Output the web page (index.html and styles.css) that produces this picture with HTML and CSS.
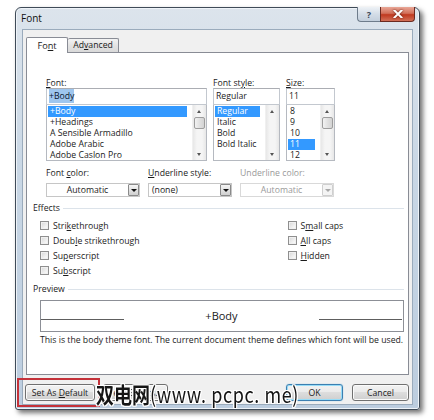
FILE: index.html
```html
<!DOCTYPE html>
<html lang="en">
<head>
    <meta charset="UTF-8">
    <meta name="viewport" content="width=device-width, initial-scale=1.0">
    <title>Font</title>
    <link rel="stylesheet" href="styles.css">
</head>
<body>
    <div class="desk">
        <div class="window">
            <div class="titlebar">
                <span class="title">Font</span>
                <div class="caption-btns">
                    <span class="cap-help">?</span>
                    <span class="cap-close">
                        <svg width="10" height="8" viewBox="0 0 10 8"><path d="M1.5 0.5 L8.5 7.5 M8.5 0.5 L1.5 7.5" stroke="#fff" stroke-width="2" stroke-linecap="square"/></svg>
                    </span>
                </div>
            </div>

            <div class="client">
                <div class="tabs">
                    <div class="tab active">Fo<u>n</u>t</div>
                    <div class="tab">Ad<u>v</u>anced</div>
                </div>

                <div class="panel">
                    <div class="pickers">
                        <div class="field">
                            <div class="lbl"><u>F</u>ont:</div>
                            <div class="textbox"><span class="hl">+Body</span></div>
                            <div class="listbox">
                                <ul>
                                    <li class="selected">+Body</li>
                                    <li>+Headings</li>
                                    <li>A Sensible Armadillo</li>
                                    <li>Adobe Arabic</li>
                                    <li>Adobe Caslon Pro</li>
                                </ul>
                                <div class="vscroll">
                                    <span class="arr up"></span>
                                    <span class="thumb"></span>
                                    <span class="track"></span>
                                    <span class="arr down"></span>
                                </div>
                            </div>
                        </div>
                        <div class="field">
                            <div class="lbl">Font st<u>y</u>le:</div>
                            <div class="textbox">Regular</div>
                            <div class="listbox">
                                <ul>
                                    <li class="selected">Regular</li>
                                    <li>Italic</li>
                                    <li>Bold</li>
                                    <li>Bold Italic</li>
                                </ul>
                                <div class="vscroll">
                                    <span class="arr up"></span>
                                    <span class="track"></span>
                                    <span class="arr down"></span>
                                </div>
                            </div>
                        </div>
                        <div class="field">
                            <div class="lbl"><u>S</u>ize:</div>
                            <div class="textbox">11</div>
                            <div class="listbox">
                                <ul>
                                    <li>8</li>
                                    <li>9</li>
                                    <li>10</li>
                                    <li class="selected">11</li>
                                    <li>12</li>
                                </ul>
                                <div class="vscroll">
                                    <span class="arr up"></span>
                                    <span class="thumb"></span>
                                    <span class="track"></span>
                                    <span class="arr down"></span>
                                </div>
                            </div>
                        </div>
                    </div>

                    <div class="combos">
                        <div class="field">
                            <div class="lbl">Font <u>c</u>olor:</div>
                            <div class="combo center"><span class="val">Automatic</span><span class="drop"></span></div>
                        </div>
                        <div class="field">
                            <div class="lbl"><u>U</u>nderline style:</div>
                            <div class="combo"><span class="val">(none)</span><span class="drop"></span></div>
                        </div>
                        <div class="field disabled">
                            <div class="lbl">Underline color:</div>
                            <div class="combo center"><span class="val">Automatic</span><span class="drop"></span></div>
                        </div>
                    </div>

                    <div class="group-head"><span>Effects</span><i></i></div>
                    <div class="checks">
                        <label class="chk"><span class="box"></span><span>Stri<u>k</u>ethrough</span></label>
                        <label class="chk"><span class="box"></span><span>Doub<u>l</u>e strikethrough</span></label>
                        <label class="chk"><span class="box"></span><span>Su<u>p</u>erscript</span></label>
                        <label class="chk"><span class="box"></span><span>Su<u>b</u>script</span></label>
                        <label class="chk"><span class="box"></span><span>S<u>m</u>all caps</span></label>
                        <label class="chk"><span class="box"></span><span><u>A</u>ll caps</span></label>
                        <label class="chk"><span class="box"></span><span><u>H</u>idden</span></label>
                    </div>

                    <div class="group-head preview-head"><span>Preview</span><i></i></div>
                    <div class="preview">
                        <span class="rule"></span>
                        <span class="sample">+Body</span>
                        <span class="rule"></span>
                    </div>
                    <div class="desc">This is the body theme font. The current document theme defines which font will be used.</div>
                </div>

                <div class="buttons">
                    <button class="btn default-btn">Set As <u>D</u>efault</button>
                    <button class="btn effects-btn">Te<u>x</u>t Effects...</button>
                    <span class="spacer"></span>
                    <button class="btn ok-btn">OK</button>
                    <button class="btn">Cancel</button>
                </div>
            </div>
        </div>

        <div class="mark"></div>
        <div class="watermark">双电网<span class="latin">(www. pcpc. me)</span></div>
    </div>
</body>
</html>
```

FILE: styles.css
```css
html, body {
    margin: 0;
    padding: 0;
}

body {
    background: #fff;
    font-family: "Open Sans", "Noto Sans", sans-serif;
    font-size: 8.7px;
    color: #1b1b1b;
}

u {
    text-decoration: underline;
    text-underline-offset: 1px;
}

.desk {
    position: relative;
    width: 434px;
    height: 420px;
    overflow: hidden;
}

/* window frame */
.window {
    box-sizing: border-box;
    width: 405px;
    height: 403px;
    margin: 7px 0 0 15px;
    padding: 0 6px 4px 6px;
    border: 1px solid #3f4b58;
    border-radius: 6px 6px 3px 3px;
    background: linear-gradient(#dce4ec, #c9d7e5 40%, #bccddf);
    box-shadow: inset 0 0 0 1px #eef3f8, 3px 3px 5px rgba(0, 0, 0, 0.55);
    display: flex;
    flex-direction: column;
}

.titlebar {
    height: 21px;
    display: flex;
    justify-content: space-between;
    align-items: flex-start;
}

.title {
    line-height: 21px;
    font-size: 10px;
    margin-left: -1px;
    color: #111;
}

.caption-btns {
    display: flex;
    margin: -1px -2px 0 0;
}

.cap-help,
.cap-close {
    box-sizing: border-box;
    height: 15px;
    display: flex;
    align-items: center;
    justify-content: center;
}

.cap-help {
    width: 23px;
    border: 1px solid #6e7c8b;
    border-top: none;
    border-right: none;
    border-radius: 0 0 0 4px;
    background: linear-gradient(#eef2f6, #d4dde7 50%, #c3cfdc);
    color: #3b4755;
    font-weight: bold;
    font-size: 9px;
}

.cap-close {
    width: 35px;
    border: 1px solid #6b2a20;
    border-top: none;
    border-radius: 0 0 4px 0;
    background: linear-gradient(#e9a797, #d2705a 45%, #c0391f 55%, #d27058);
}

.cap-close svg {
    filter: drop-shadow(0 0 1px #5a1508);
}

/* client area */
.client {
    box-sizing: border-box;
    height: 376px;
    border: 1px solid #9aabbc;
    background: #f0f0f0;
    padding: 7px 3px 0 3px;
    display: flex;
    flex-direction: column;
}

.tabs {
    display: flex;
    height: 15px;
    align-items: flex-end;
}

.tab {
    box-sizing: border-box;
    border: 1px solid #898c95;
    border-bottom: none;
    border-radius: 2px 2px 0 0;
    text-align: center;
}

.tab.active {
    position: relative;
    z-index: 1;
    width: 42px;
    height: 16px;
    margin-bottom: -1px;
    background: #fff;
    line-height: 15px;
    font-size: 9.2px;
}

.tab:not(.active) {
    width: 51px;
    height: 14px;
    line-height: 13px;
    border-left: none;
    background: linear-gradient(#f3f3f3, #e3e3e3 50%, #d9d9d9);
}

.panel {
    box-sizing: border-box;
    height: 323px;
    border: 1px solid #898c95;
    background: #fff;
    padding: 24px 4px 0 6px;
}

.lbl {
    line-height: 12px;
    white-space: nowrap;
}

/* font / style / size pickers */
.pickers {
    margin-left: 13px;
    display: grid;
    grid-template-columns: 161px 67px 49px;
    column-gap: 6px;
}

.pickers .lbl {
    height: 11px;
}

.textbox {
    box-sizing: border-box;
    height: 17px;
    border: 1px solid #c3c8cf;
    border-top-color: #abadb3;
    padding-left: 2px;
    line-height: 15px;
}

.textbox .hl {
    background: #9ec6ee;
    color: #0b1630;
    padding: 1px 0;
}

.listbox {
    box-sizing: border-box;
    height: 56px;
    border: 1px solid #b5b9c0;
    border-top: none;
    display: flex;
    padding: 1px 0 0 1px;
    overflow: hidden;
}

.listbox ul {
    flex: 1;
    list-style: none;
    margin: 0;
    padding: 0;
}

.listbox li {
    height: 11px;
    line-height: 11px;
    padding-left: 2px;
    margin-right: 5px;
    white-space: nowrap;
}

.listbox li.selected {
    background: #3399ff;
    color: #fff;
}

.vscroll {
    width: 13px;
    margin-top: -1px;
    display: flex;
    flex-direction: column;
    align-items: center;
    background: linear-gradient(90deg, #e7e7e7, #f5f5f5 30%, #f5f5f5 70%, #e7e7e7);
    border-left: 1px solid #f0f0f0;
}

.arr {
    height: 12px;
    width: 13px;
    position: relative;
}

.arr::after {
    content: "";
    position: absolute;
    left: 4px;
    border-left: 2.5px solid transparent;
    border-right: 2.5px solid transparent;
}

.arr.up::after {
    top: 5px;
    border-bottom: 3px solid #555;
}

.arr.down::after {
    bottom: 4px;
    border-top: 3px solid #555;
}

.thumb {
    box-sizing: border-box;
    width: 11px;
    height: 12px;
    border: 1px solid #9d9d9d;
    border-radius: 2px;
    background: linear-gradient(90deg, #f2f2f2, #e1e1e1 50%, #d3d3d3);
}

.track {
    flex: 1;
}

/* combos */
.combos {
    margin: 6px 0 0 13px;
    display: grid;
    grid-template-columns: 94px 84px 94px;
    column-gap: 8px;
}

.combo {
    box-sizing: border-box;
    height: 14px;
    margin-top: 4px;
    border: 1px solid #c6c6c6;
    display: flex;
    align-items: stretch;
}

.combo .val {
    flex: 1;
    line-height: 12px;
    padding-left: 3px;
    white-space: nowrap;
}

.combo.center .val {
    text-align: center;
    padding-left: 0;
}

.drop {
    box-sizing: border-box;
    width: 11px;
    border: 1px solid #8a8a8a;
    border-radius: 1px;
    background: linear-gradient(#f6f6f6, #e2e2e2 50%, #cfcfcf);
    display: flex;
    align-items: center;
    justify-content: center;
}

.drop::after {
    content: "";
    border-left: 3px solid transparent;
    border-right: 3px solid transparent;
    border-top: 3px solid #111;
}

.disabled .lbl,
.disabled .val {
    color: #9a9a9a;
}

.disabled .combo {
    border-color: #d9d9d9;
}

.disabled .drop {
    border-color: #cfcfcf;
    background: #f4f4f4;
}

.disabled .drop::after {
    border-top-color: #a8a8a8;
}

/* groups */
.group-head {
    margin-top: 5px;
    height: 12px;
    display: flex;
    align-items: center;
    gap: 3px;
    line-height: 12px;
}

.group-head i {
    flex: 1;
    height: 1px;
    background: #dce3ea;
}

.checks {
    margin: 4px 0 0 7px;
    display: grid;
    grid-template-columns: 247.5px auto;
    grid-template-rows: repeat(4, 15px);
    grid-auto-flow: column;
}

.chk {
    display: flex;
    align-items: center;
    gap: 4px;
    white-space: nowrap;
}

.box {
    box-sizing: border-box;
    width: 9px;
    height: 9px;
    border: 1px solid #8f8f8f;
    background: linear-gradient(135deg, #d6d6d6, #f4f4f4 70%, #fbfbfb);
    box-shadow: inset 0 0 0 1px #f0f0f0;
}

.preview {
    box-sizing: border-box;
    height: 32px;
    margin: 5px 0 0 7px;
    border: 1px solid #8c8f96;
    padding: 0 1px 0 0;
    display: flex;
    align-items: center;
    justify-content: space-between;
}

.preview .rule {
    width: 83px;
    height: 1px;
    margin-top: 6px;
    background: #5e5e5e;
}

.preview .sample {
    font-size: 11px;
    margin-bottom: 2px;
}

.desc {
    margin: 2px 0 0 7px;
    line-height: 12px;
    white-space: nowrap;
}

/* bottom buttons */
.buttons {
    display: flex;
    padding-top: 9px;
}

.btn {
    box-sizing: border-box;
    height: 17px;
    padding: 0;
    border: 1px solid #707070;
    border-radius: 3px;
    background: linear-gradient(#f2f2f2, #ebebeb 45%, #dddddd 50%, #cfcfcf);
    box-shadow: inset 0 0 0 1px #fbfbfb;
    font-family: inherit;
    font-size: 8.7px;
    color: #1b1b1b;
    width: 57px;
}

.default-btn {
    width: 70px;
    margin-left: -1px;
}

.effects-btn {
    width: 65px;
    margin-left: 8px;
}

.spacer {
    flex: 1;
}

.ok-btn {
    margin-right: 9px;
    border-color: #3c7fb1;
    box-shadow: inset 0 0 0 1px #97dcf7, 0 0 1px #5fb2e0;
}

/* annotations over the screenshot */
.mark {
    position: absolute;
    left: 17px;
    top: 378px;
    width: 83px;
    height: 29px;
    box-sizing: border-box;
    border: 2px solid #c4323a;
}

.watermark {
    position: absolute;
    left: 96px;
    top: 380px;
    font-family: "Noto Sans CJK SC", sans-serif;
    font-size: 18px;
    font-weight: bold;
    line-height: 22px;
    color: #151515;
    white-space: nowrap;
    transform: scaleY(1.2);
    transform-origin: top left;
    text-shadow: 1px 0 #fff, -1px 0 #fff, 0 1px #fff, 0 -1px #fff, 1px 1px #fff, -1px -1px #fff, 1px -1px #fff, -1px 1px #fff;
}

.watermark .latin {
    font-weight: normal;
    letter-spacing: 0.6px;
}
```
